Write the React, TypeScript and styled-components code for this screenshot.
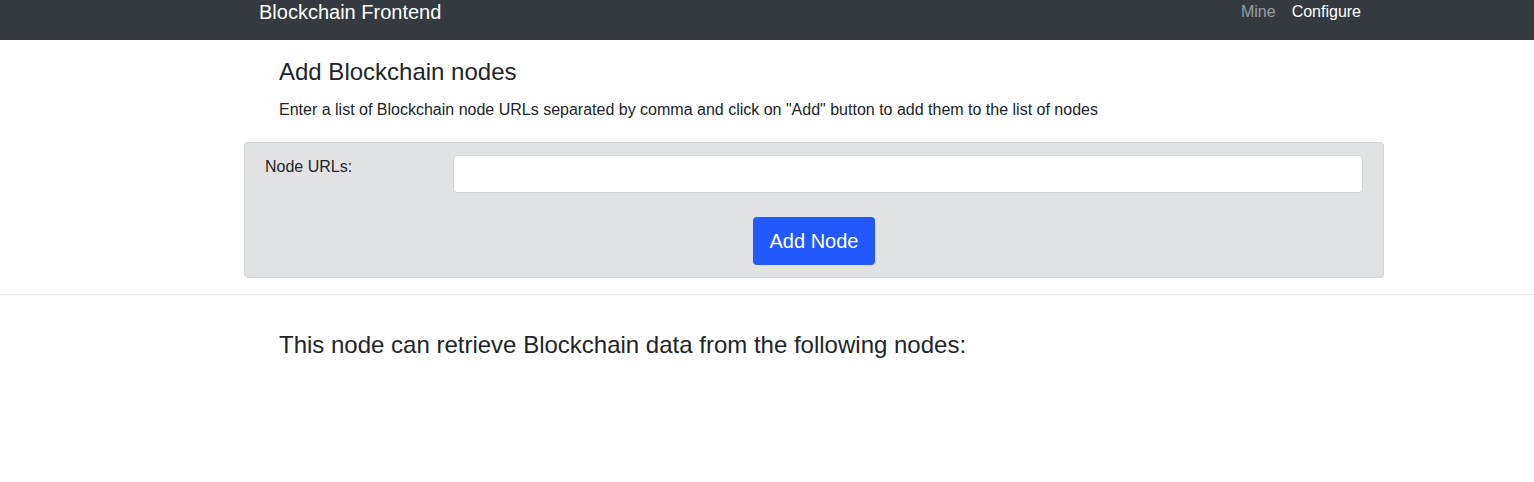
import React from "react";
import styled, { createGlobalStyle } from "styled-components";

const Global = createGlobalStyle`
  html, body { margin: 0; padding: 0; background: #fff; }
  body {
    font-family: "Liberation Sans", Arial, sans-serif;
    font-size: 16px;
    line-height: 1.5;
    color: #212529;
  }
`;

const NavBar = styled.nav`
  background: #343a40;
  height: 40px;
`;

const NavInner = styled.div`
  width: 1110px;
  margin-left: 244px;
  padding: 0 15px;
  height: 24px;
  display: flex;
  align-items: center;
  justify-content: space-between;
`;

const Brand = styled.a`
  color: #fff;
  font-size: 20px;
  line-height: 24px;
  text-decoration: none;
`;

const NavLinks = styled.div`
  display: flex;
`;

const NavLink = styled.a<{ $active?: boolean }>`
  color: ${(p) => (p.$active ? "#fff" : "rgba(255,255,255,0.5)")};
  font-size: 16px;
  line-height: 24px;
  padding: 0 8px;
  text-decoration: none;
`;

const Container = styled.div`
  width: 1140px;
  margin-left: 244px;
`;

const Intro = styled.div`
  padding: 18px 35px 0;
`;

const Title = styled.h4`
  margin: 0;
  font-size: 24px;
  font-weight: 500;
  line-height: 28px;
`;

const Lead = styled.p`
  margin: 12px 0 0;
  font-size: 16px;
  line-height: 24px;
`;

const Card = styled.div`
  margin-top: 20px;
  background: #e1e2e4;
  border: 1px solid #d3d5d8;
  border-radius: 4px;
  padding: 12px 20px 12px;
`;

const FormRow = styled.div`
  display: grid;
  grid-template-columns: 188px 1fr;
  align-items: start;
`;

const Label = styled.label`
  font-size: 16px;
  line-height: 24px;
`;

const Input = styled.input`
  box-sizing: border-box;
  width: 100%;
  height: 38px;
  border: 1px solid #ced4da;
  border-radius: 4px;
  background: #fff;
  font-family: inherit;
  font-size: 16px;
  padding: 6px 12px;
  outline: none;
`;

const ButtonRow = styled.div`
  display: flex;
  justify-content: center;
  margin-top: 24px;
`;

const Button = styled.button`
  background: #2458ff;
  color: #fff;
  border: none;
  border-radius: 4px;
  font-family: inherit;
  font-size: 20px;
  line-height: 30px;
  padding: 9px 17px;
  cursor: pointer;
`;

const Rule = styled.hr`
  margin: 16px 0 0;
  border: 0;
  border-top: 1px solid #e5e5e5;
`;

const SubTitle = styled.h4`
  margin: 0;
  padding: 36px 35px 0;
  font-size: 24px;
  font-weight: 500;
  line-height: 28px;
`;

export default function App() {
  return (
    <>
      <Global />
      <NavBar>
        <NavInner>
          <Brand href="#">Blockchain Frontend</Brand>
          <NavLinks>
            <NavLink href="#">Mine</NavLink>
            <NavLink href="#" $active>
              Configure
            </NavLink>
          </NavLinks>
        </NavInner>
      </NavBar>
      <Container>
        <Intro>
          <Title>Add Blockchain nodes</Title>
          <Lead>
            Enter a list of Blockchain node URLs separated by comma and click on "Add" button to add them to the list of nodes
          </Lead>
        </Intro>
        <Card>
          <FormRow>
            <Label>Node URLs:</Label>
            <Input type="text" />
          </FormRow>
          <ButtonRow>
            <Button>Add Node</Button>
          </ButtonRow>
        </Card>
      </Container>
      <Rule />
      <Container>
        <SubTitle>This node can retrieve Blockchain data from the following nodes:</SubTitle>
      </Container>
    </>
  );
}
